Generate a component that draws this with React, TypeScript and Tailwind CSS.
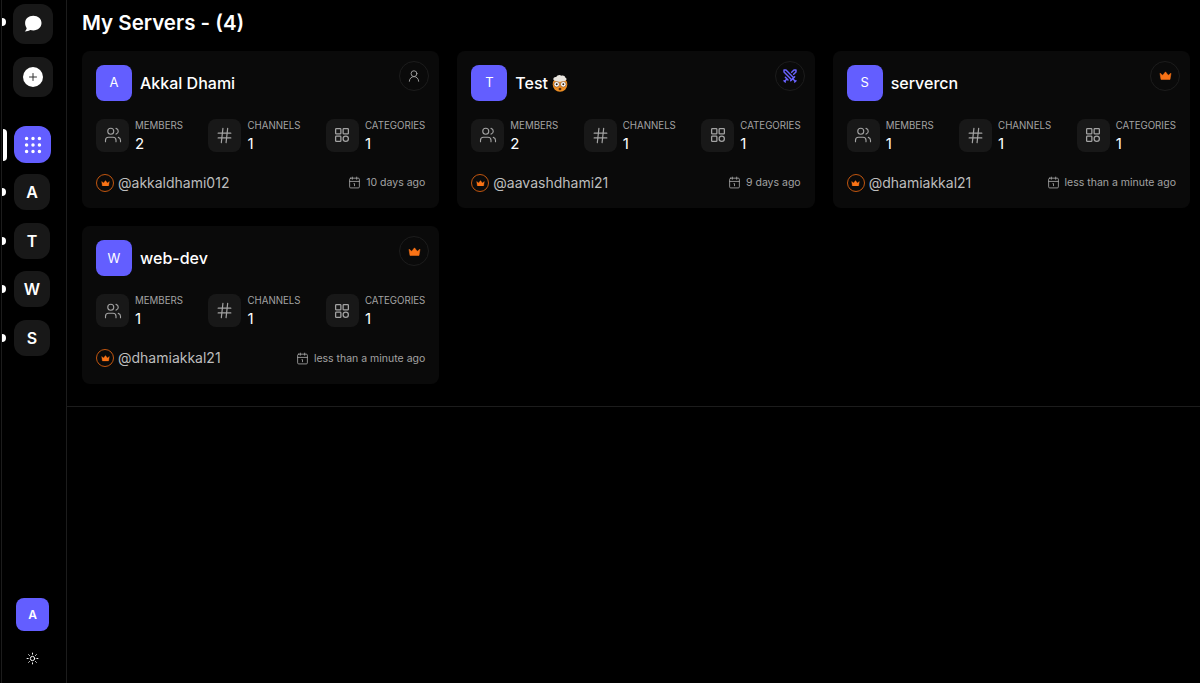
import React from "react";
import { Users, Hash, UserRound, Calendar1, Grip, Sun, Plus, Swords } from "lucide-react";

function Crown({ size, className }: { size: number; className?: string }) {
  return (
    <svg width={size} height={size * 0.72} viewBox="0 0 15 11" fill="#f97316" className={className}>
      <path d="M1 2.600 L4.300 5 L7.500 1 L10.700 5 L14 2.600 L12.800 10 H2.200 Z" stroke="#f97316" strokeWidth="0.6" strokeLinejoin="round" />
    </svg>
  );
}

function CategoryIcon() {
  return (
    <svg width="18" height="18" viewBox="0 0 24 24" fill="none" stroke="#a3a3a3" strokeWidth="1.7" strokeLinecap="round" strokeLinejoin="round">
      <rect x="3.500" y="3.500" width="7" height="7" rx="1" />
      <rect x="13.500" y="3.500" width="7" height="7" rx="1" />
      <rect x="3.500" y="13.500" width="7" height="7" rx="1" />
      <circle cx="17" cy="17" r="3.500" />
    </svg>
  );
}

function ExplodingHead() {
  return (
    <svg width="18" height="18" viewBox="0 0 18 18" className="ml-[3px]">
      <circle cx="9" cy="10.500" r="7.300" fill="#ee8f24" />
      <path d="M2.500 6c-.8-2 1.200-3.300 2.700-2.900C6 1 9 .5 10.300 1.700c1.600-.8 3.900 0 3.900 1.900 1.500.4 1.800 2.300.5 3C12 8.200 5.500 8.200 2.500 6z" fill="#e8e4de" />
      <circle cx="5.700" cy="10.300" r="2.700" fill="#fff" stroke="#5b2c0c" strokeWidth="0.5" />
      <circle cx="12.300" cy="10.300" r="2.700" fill="#fff" stroke="#5b2c0c" strokeWidth="0.5" />
      <circle cx="5.700" cy="10.300" r="1" fill="#2e1b0a" />
      <circle cx="12.300" cy="10.300" r="1" fill="#2e1b0a" />
      <ellipse cx="9" cy="15" rx="1.400" ry="1.200" fill="#5b2c0c" />
    </svg>
  );
}

function Stat({ icon, label, value }: { icon: React.ReactNode; label: string; value: number }) {
  return (
    <div className="flex items-start gap-[6px]">
      <div className="flex h-[33px] w-[33px] items-center justify-center rounded-lg bg-[#181818]">{icon}</div>
      <div className="flex flex-col">
        <span className="text-[9.700px] leading-[13px] text-[#a3a3a3] uppercase">{label}</span>
        <span className="mt-[3px] text-[15px] leading-[18px] font-normal text-white">{value}</span>
      </div>
    </div>
  );
}

function Card({ letter, name, emoji, role, members, owner, time }: {
  letter: string; name: string; emoji?: boolean; role: "user" | "mod" | "admin"; members: number; owner: string; time: string;
}) {
  return (
    <div className="relative flex h-[157.600px] flex-col rounded-lg bg-[#0a0a0a] px-[14px] pt-[14px]">
      <div className="absolute top-[10px] right-[10px] flex h-[30px] w-[30px] items-center justify-center rounded-full border border-[#1c1c1c]">
        {role === "user" && <UserRound size={14} color="#a3a3a3" strokeWidth={1.6} />}
        {role === "mod" && <Swords size={16} color="#6a63ff" strokeWidth={2.2} />}
        {role === "admin" && <Crown size={13} />}
      </div>
      <div className="flex items-center gap-2">
        <div className="flex h-9 w-9 items-center justify-center rounded-lg bg-[#635eff] text-[13px] text-white">{letter}</div>
        <span className="flex items-center text-[16px] leading-6 font-medium text-white">
          {name}
          {emoji && <ExplodingHead />}
        </span>
      </div>
      <div className="mt-[18px] flex justify-between">
        <Stat icon={<Users size={18} color="#a3a3a3" strokeWidth={1.5} />} label="Members" value={members} />
        <Stat icon={<Hash size={19} color="#a3a3a3" strokeWidth={1.5} />} label="Channels" value={1} />
        <Stat icon={<CategoryIcon />} label="Categories" value={1} />
      </div>
      <div className="mt-[20px] flex items-center justify-between">
        <div className="flex items-center gap-1">
          <div className="flex h-[18px] w-[18px] items-center justify-center rounded-full border border-[#c2560f]">
            <Crown size={9} />
          </div>
          <span className="text-sm leading-5 text-[#bdbdbd]">{owner}</span>
        </div>
        <div className="flex items-center gap-[5px] text-[10.500px] text-[#a3a3a3]">
          <Calendar1 size={13} strokeWidth={1.6} />
          <span>{time}</span>
        </div>
      </div>
    </div>
  );
}

function Rail({ letter }: { letter: string }) {
  return (
    <div className="relative flex h-9 w-full items-center pl-[14px]">
      <span className="absolute top-[14px] left-[2px] h-2 w-1 rounded-r-full bg-white" />
      <div className="flex h-9 w-9 items-center justify-center rounded-xl bg-[#181818] text-base font-semibold text-white">{letter}</div>
    </div>
  );
}

export default function App() {
  return (
    <div className="flex h-screen w-full overflow-hidden bg-black font-['Inter',sans-serif]">
      <aside className="ml-[1px] flex h-full w-[66px] shrink-0 flex-col border-r border-l border-[#1c1c1c]">
        <div className="relative mt-1 flex h-10 items-center pl-[11px]">
          <span className="absolute top-[14px] left-0 h-2 w-1 rounded-r-full bg-white" />
          <div className="flex h-10 w-10 items-center justify-center rounded-xl bg-[#181818]">
            <svg width="20" height="20" viewBox="0 0 20 20" fill="#fff">
              <path d="M10.300 1.800c4.700 0 8.200 3 8.200 7.300s-3.500 7.400-8.200 7.400c-1.100 0-2.100-.2-3-.5-1.300.8-3 1.300-5.500 1.500 1-1 1.600-2.100 1.900-3.300C2.800 12.900 2.100 11.100 2.100 9.100c0-4.300 3.500-7.300 8.200-7.300z" />
            </svg>
          </div>
        </div>
        <div className="mt-[13px] flex h-10 items-center pl-[11px]">
          <div className="flex h-10 w-10 items-center justify-center rounded-xl bg-[#181818]">
            <div className="flex h-5 w-5 items-center justify-center rounded-full bg-white">
              <Plus size={12} color="#333" strokeWidth={2} />
            </div>
          </div>
        </div>
        <div className="relative mt-[29px] flex h-[37px] items-center pl-3">
          <span className="absolute top-[3px] left-[1px] h-8 w-[4px] rounded-r-sm bg-white" />
          <div className="flex h-[37px] w-[37px] items-center justify-center rounded-xl bg-[#635eff]">
            <Grip size={22} color="#fff" strokeWidth={1.8} />
          </div>
        </div>
        <div className="mt-[11px] ml-[-2px] flex flex-col gap-[12.700px]">
          <Rail letter="A" />
          <Rail letter="T" />
          <Rail letter="W" />
          <Rail letter="S" />
        </div>
        <div className="mt-auto flex flex-col items-center pr-[3px] pb-[18px]">
          <div className="flex h-[33px] w-[33px] items-center justify-center rounded-lg bg-[#635eff] text-xs font-semibold text-white">A</div>
          <Sun size={13} color="#fff" strokeWidth={1.8} className="mt-[21px]" />
        </div>
      </aside>
      <main className="flex-1">
        <div className="border-b border-[#1c1c1c] pr-[10px] pb-[22px] pl-[15px]">
          <h1 className="h-[50.900px] pt-[9px] text-[20.500px] leading-7 font-semibold text-white">My Servers - (4)</h1>
          <div className="grid grid-cols-3 gap-[18px]">
            <Card letter="A" name="Akkal Dhami" role="user" members={2} owner="@akkaldhami012" time="10 days ago" />
            <Card letter="T" name="Test" emoji role="mod" members={2} owner="@aavashdhami21" time="9 days ago" />
            <Card letter="S" name="servercn" role="admin" members={1} owner="@dhamiakkal21" time="less than a minute ago" />
            <Card letter="W" name="web-dev" role="admin" members={1} owner="@dhamiakkal21" time="less than a minute ago" />
          </div>
        </div>
      </main>
    </div>
  );
}
